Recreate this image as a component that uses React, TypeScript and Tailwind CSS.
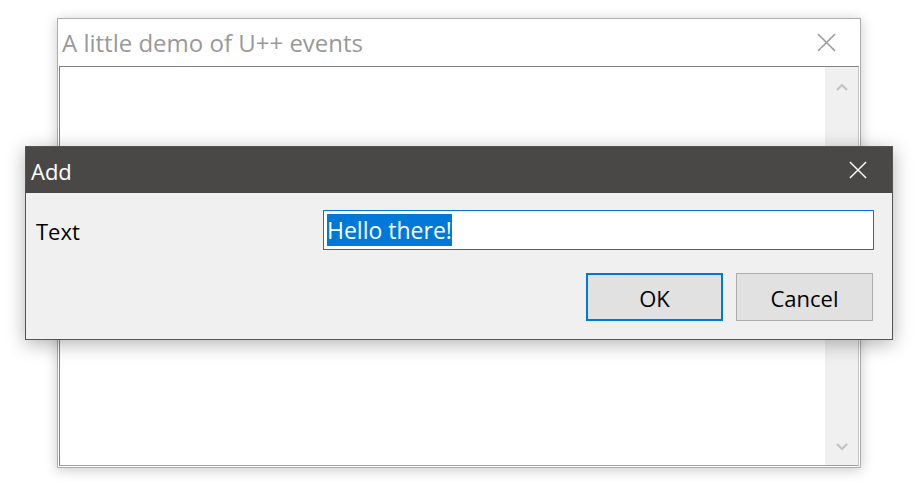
import * as React from "react";

const FONT = { fontFamily: '"Open Sans", "Noto Sans", sans-serif' };

function CloseGlyph({ color, size }: { color: string; size: number }) {
  return (
    <svg width={size} height={size} viewBox="0 0 20 20">
      <path d="M1 1 L19 19 M19 1 L1 19" stroke={color} strokeWidth="1.6" fill="none" />
    </svg>
  );
}

function Chevron({ up }: { up?: boolean }) {
  return (
    <svg width="12" height="8" viewBox="0 0 12 8">
      <path
        d={up ? "M1 7 L6 2 L11 7" : "M1 1 L6 6 L11 1"}
        stroke="#c2c2c2"
        strokeWidth="2.2"
        fill="none"
      />
    </svg>
  );
}

export default function App() {
  return (
    <div className="relative w-[920px] h-[487px] bg-white overflow-hidden" style={FONT}>
      {/* MAIN WINDOW */}
      <div className="absolute left-[57px] top-[18px] w-[804px] h-[450px] flex flex-col border border-[#adadad] bg-white shadow-[0_2px_12px_rgba(0,0,0,0.22)]">
        <div className="h-[47px] flex items-center justify-between pl-[4px] pr-[24px]">
          <span className="text-[24px] text-[#999999] leading-none">A little demo of U++ events</span>
          <CloseGlyph color="#9a9a9a" size={19} />
        </div>
        <div className="flex-1 flex ml-px mb-px mr-px border-t border-l border-[#828282] border-b border-b-[#a0a0a0] border-r border-r-[#c8c8c8]">
          <div className="flex-1 bg-white" />
          <div className="w-[33px] bg-[#f0f0f0] flex flex-col items-center justify-between pt-[16px] pb-[14px]">
            <Chevron up />
            <Chevron />
          </div>
        </div>
      </div>

      {/* ADD DIALOG */}
      <div className="absolute left-[25px] top-[146px] w-[868px] h-[194px] flex flex-col border border-[#555555] bg-[#f0f0f0] shadow-[0_4px_18px_rgba(0,0,0,0.3)]">
        <div className="h-[46px] bg-[#4a4846] flex items-center justify-between pl-[5px] pr-[25px]">
          <span className="text-[22px] text-white leading-none mt-[1px]">Add</span>
          <CloseGlyph color="#ffffff" size={18} />
        </div>
        <div className="flex-1 flex flex-col pt-[17px] pr-[18px] pb-[17px] pl-[10px]">
          <div className="flex items-center h-[40px]">
            <span className="w-[287px] text-[22px] text-black leading-none mt-[2px]">Text</span>
            <div className="flex-1 h-[40px] border border-[#0078d7] bg-white flex items-center px-[3px]">
              <span className="bg-[#0078d7] text-white text-[23px] leading-[32px] h-[32px]">Hello there!</span>
            </div>
          </div>
          <div className="flex justify-end gap-[13px] mt-[23px] mr-px">
            <button className="w-[137px] h-[48px] bg-[#e1e1e1] border-2 border-[#0078d7] text-[22px] text-black leading-none pt-[1px]">OK</button>
            <button className="w-[137px] h-[48px] bg-[#e1e1e1] border border-[#adadad] text-[22px] text-black leading-none pt-[1px]">Cancel</button>
          </div>
        </div>
      </div>
    </div>
  );
}
